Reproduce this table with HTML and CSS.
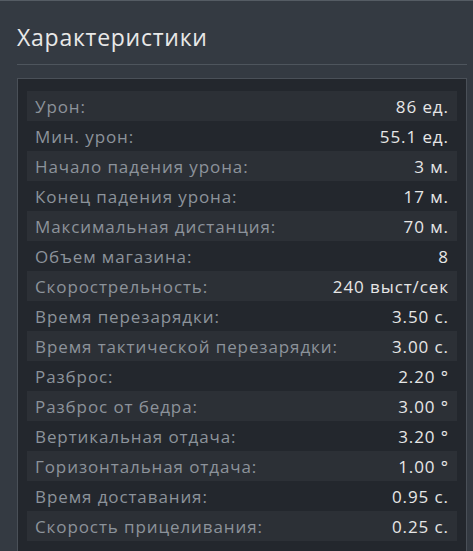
FILE: index.html
```html
<!DOCTYPE html>
<html lang="ru">
<head>
<meta charset="utf-8">
<link rel="stylesheet" href="styles.css">
</head>
<body>
<div class="panel">
  <h2 class="title">Характеристики</h2>
  <div class="stats">
    <div class="row"><span class="label">Урон:</span><span class="value">86 ед.</span></div>
    <div class="row"><span class="label">Мин. урон:</span><span class="value">55.1 ед.</span></div>
    <div class="row"><span class="label">Начало падения урона:</span><span class="value">3 м.</span></div>
    <div class="row"><span class="label">Конец падения урона:</span><span class="value">17 м.</span></div>
    <div class="row"><span class="label">Максимальная дистанция:</span><span class="value">70 м.</span></div>
    <div class="row"><span class="label">Объем магазина:</span><span class="value">8</span></div>
    <div class="row"><span class="label">Скорострельность:</span><span class="value">240 выст/сек</span></div>
    <div class="row"><span class="label">Время перезарядки:</span><span class="value">3.50 с.</span></div>
    <div class="row"><span class="label">Время тактической перезарядки:</span><span class="value">3.00 с.</span></div>
    <div class="row"><span class="label">Разброс:</span><span class="value">2.20 °</span></div>
    <div class="row"><span class="label">Разброс от бедра:</span><span class="value">3.00 °</span></div>
    <div class="row"><span class="label">Вертикальная отдача:</span><span class="value">3.20 °</span></div>
    <div class="row"><span class="label">Горизонтальная отдача:</span><span class="value">1.00 °</span></div>
    <div class="row"><span class="label">Время доставания:</span><span class="value">0.95 с.</span></div>
    <div class="row"><span class="label">Скорость прицеливания:</span><span class="value">0.25 с.</span></div>
  </div>
</div>
</body>
</html>
```
FILE: styles.css
```css
html, body {
  margin: 0;
  padding: 0;
}
body {
  background: #343a42;
  border-top: 1px solid #555c64;
  font-family: "Open Sans", "DejaVu Sans", sans-serif;
  height: 550px;
  overflow: hidden;
}
.panel {
  padding: 0 6px 0 17px;
}
.title {
  margin: 0;
  padding-top: 20px;
  padding-bottom: 11px;
  font-size: 23px;
  line-height: 32px;
  font-weight: 400;
  color: #e8e8e8;
  letter-spacing: 0.75px;
  border-bottom: 1px solid #4e555d;
}
.stats {
  margin-top: 13px;
  border: 1px solid #4a5058;
  background: #23272d;
  padding: 12px 9px 20px;
}
.row {
  display: flex;
  justify-content: space-between;
  align-items: center;
  height: 30px;
  padding: 0 9px 0 8px;
  font-size: 17px;
  letter-spacing: 0.9px;
}
.row:nth-child(odd) {
  background: #2c3036;
}
.label {
  color: #8c939b;
}
.value {
  color: #e6e6e6;
  margin-right: -0.9px;
}
```
